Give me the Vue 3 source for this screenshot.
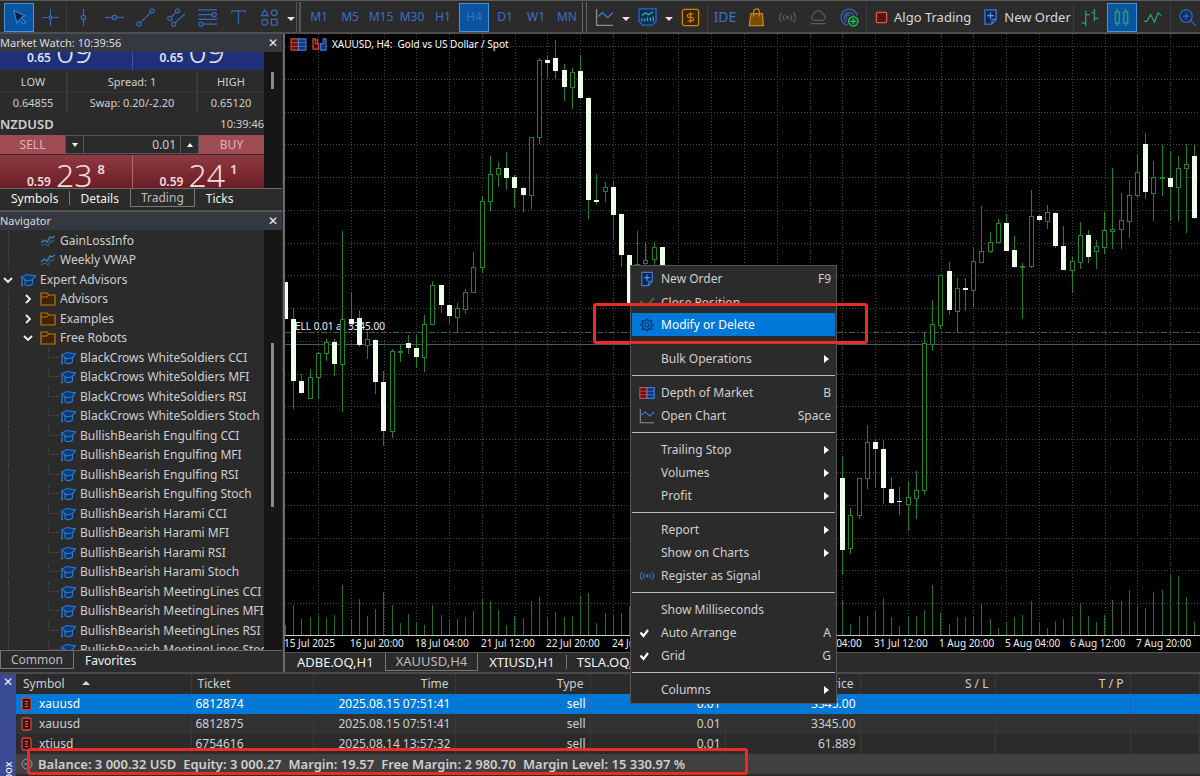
<script setup>
import { ref } from 'vue'

const drawTools = [
  { id: 'vline', label: 'Vertical line' },
  { id: 'hline', label: 'Horizontal line' },
  { id: 'trend', label: 'Trendline' },
  { id: 'channel', label: 'Channel' },
  { id: 'fibo', label: 'Fibonacci' },
  { id: 'text', label: 'Text' },
  { id: 'shapes', label: 'Shapes' }
]
const timeframes = ['M1', 'M5', 'M15', 'M30', 'H1', 'H4', 'D1', 'W1', 'MN']
const lot = ref('0.01')

const robots = [
  'BlackCrows WhiteSoldiers CCI', 'BlackCrows WhiteSoldiers MFI', 'BlackCrows WhiteSoldiers RSI',
  'BlackCrows WhiteSoldiers Stoch', 'BullishBearish Engulfing CCI', 'BullishBearish Engulfing MFI',
  'BullishBearish Engulfing RSI', 'BullishBearish Engulfing Stoch', 'BullishBearish Harami CCI',
  'BullishBearish Harami MFI', 'BullishBearish Harami RSI', 'BullishBearish Harami Stoch',
  'BullishBearish MeetingLines CCI', 'BullishBearish MeetingLines MFI', 'BullishBearish MeetingLines RSI',
  'BullishBearish MeetingLines Stoch'
]
const tree = [
  { t: 'GainLossInfo', k: 'ind', l: 2 },
  { t: 'Weekly VWAP', k: 'ind', l: 2 },
  { t: 'Expert Advisors', k: 'cap', l: 1, c: 'open' },
  { t: 'Advisors', k: 'folder', l: 2, c: 'closed' },
  { t: 'Examples', k: 'folder', l: 2, c: 'closed' },
  { t: 'Free Robots', k: 'folder', l: 2, c: 'open' },
  ...robots.map(t => ({ t, k: 'cap', l: 3 }))
]

// index, rising (1) or falling (0), high, body top, body bottom, low
const candles = [
  [0,0,248,248,285,285],[1,0,274,285,347,375],[2,0,340,347,359,360],[3,1,335,343,364,364],
  [4,1,318,319,343,365],[5,1,305,308,319,327],[6,0,305,308,330,342],[7,1,197,285,330,378],
  [8,0,259,285,290,290],[9,0,276,284,311,313],[10,1,297,305,311,325],[11,0,305,306,348,360],
  [12,0,337,348,397,412],[13,1,315,317,397,404],[14,1,310,317,318,328],[15,0,301,309,314,320],
  [16,0,301,314,323,334],[17,1,281,290,323,338],[18,1,247,251,290,291],[19,0,251,251,271,279],
  [20,0,271,271,282,290],[21,1,269,274,283,299],[22,1,255,258,275,280],[23,1,218,233,258,259],
  [24,1,162,167,233,239],[25,1,122,140,167,177],[26,1,128,134,140,153],[27,0,118,134,144,156],
  [28,0,141,143,154,174],[29,0,153,154,161,178],[30,1,103,103,161,175],[31,1,24,26,103,110],
  [32,0,22,26,29,44],[33,0,6,24,37,45],[34,0,30,36,53,67],[35,1,34,38,53,75],
  [36,0,21,37,64,65],[37,0,63,64,166,185],[38,0,140,166,168,171],[39,1,148,153,157,168],
  [40,0,147,153,181,206],[41,0,180,180,221,233],[42,0,221,221,269,270],[43,1,197,230,236,240],
  [44,1,208,226,229,235],[45,1,208,213,225,235],[46,0,213,213,240,240],
  [68,0,422,444,516,541],[69,1,474,481,514,520],[70,1,444,444,481,485],[71,1,391,408,444,455],
  [72,0,406,408,415,454],[73,0,406,415,454,470],[74,0,443,455,469,470],[75,0,453,467,468,481],
  [76,1,448,463,470,497],[77,1,437,456,464,485],[78,1,298,309,456,461],[79,1,266,290,310,317],
  [80,1,241,241,291,295],[81,0,228,237,276,281],[82,1,244,254,277,299],[83,0,244,254,256,277],
  [84,1,214,227,256,273],[85,1,172,217,228,229],[86,1,198,208,217,219],[87,1,185,189,208,209],
  [88,0,180,189,217,217],[89,0,202,216,233,234],[90,1,229,232,233,285],[91,1,156,182,232,234],
  [92,0,181,182,186,188],[93,1,171,178,187,195],[94,0,178,179,212,214],[95,0,192,212,236,236],
  [96,1,223,227,236,259],[97,1,188,201,228,235],[98,0,196,201,223,229],[99,1,206,212,217,235],
  [100,1,178,196,213,220],[101,1,134,195,197,215],[102,1,159,186,195,215],[103,1,146,161,187,204],
  [104,1,120,138,161,164],[105,0,99,110,158,165],[106,1,127,143,159,187],[107,1,111,143,144,162],
  [108,0,117,144,153,187],[109,1,122,134,153,187],[110,1,110,130,134,199],[111,0,110,122,184,185]
]
const volumes = [
  10,30,16,18,20,17,20,50,16,36,19,26,43,30,12,21,13,10,30,20,15,16,18,24,36,34,25,10,19,
  17,34,38,17,23,18,19,39,42,12,22,20,22,29,16,12,20,18,12,20,26,18,22,30,16,14,20,18,26,
  32,20,14,18,22,26,18,12,20,24,35,11,19,19,24,37,18,9,19,19,25,50,22,11,18,18,19,32,16,7,
  13,18,20,34,13,7,14,16,19,31,19,13,20,35,34,45,29,27,43,45,60,59,38,13
]
const step = 8.193
const cx = i => Math.round(i * step)
const axisY = 601
const gridX = Array.from({ length: 60 }, (_, i) => Math.round(33 + i * step * 4))
const gridY = Array.from({ length: 18 }, (_, i) => Math.round(12 + i * 32.77))
const dates = ['15 Jul 2025', '16 Jul 20:00', '18 Jul 04:00', '21 Jul 12:00', '22 Jul 20:00', '24 Jul 04:00',
  '25 Jul 12:00', '28 Jul 20:00', '30 Jul 04:00', '31 Jul 12:00', '1 Aug 20:00', '5 Aug 04:00', '6 Aug 12:00', '7 Aug 20:00']

const menu = [
  { t: 'New Order', key: 'F9', icon: 'order' },
  { t: 'Close Position', icon: 'tick', cut: true },
  { t: 'Modify or Delete', icon: 'gear', on: true },
  null,
  { t: 'Bulk Operations', sub: true },
  null,
  { t: 'Depth of Market', key: 'B', icon: 'depth' },
  { t: 'Open Chart', key: 'Space', icon: 'chart' },
  null,
  { t: 'Trailing Stop', sub: true },
  { t: 'Volumes', sub: true },
  { t: 'Profit', sub: true },
  null,
  { t: 'Report', sub: true },
  { t: 'Show on Charts', sub: true },
  { t: 'Register as Signal', icon: 'signal' },
  null,
  { t: 'Show Milliseconds' },
  { t: 'Auto Arrange', key: 'A', icon: 'check' },
  { t: 'Grid', key: 'G', icon: 'check' },
  null,
  { t: 'Columns', sub: true }
]

const rows = [
  ['xauusd', '6812874', '2025.08.15 07:51:41', 'sell', '0.01', '3345.00'],
  ['xauusd', '6812875', '2025.08.15 07:51:41', 'sell', '0.01', '3345.00'],
  ['xtiusd', '6754616', '2025.08.14 13:57:32', 'sell', '0.01', '61.889']
]
</script>

<template>
  <div class="app">
    <svg class="defs" aria-hidden="true">
      <symbol id="i-order" viewBox="0 0 16 18">
        <path d="M2 1.500h12v10l-4.500 5H2z M14 11.500h-4.500v5" fill="#10294f" stroke="#4078d8" stroke-width="1.300" />
        <path d="M8 4v7M4.500 7.500h7" stroke="#5a93f0" stroke-width="1.300" />
      </symbol>
      <symbol id="i-depth" viewBox="0 0 18 14">
        <path d="M1 1h8v12H1z" fill="#5a1512" stroke="#d8443a" stroke-width="1.400" />
        <path d="M9 1h8v12H9z" fill="#12336e" stroke="#3d7be0" stroke-width="1.400" />
        <path d="M1 5h8M1 9h8" stroke="#d8443a" /><path d="M9 5h8M9 9h8" stroke="#3d7be0" />
      </symbol>
      <symbol id="i-chart" viewBox="0 0 18 18">
        <path d="M1.500 1v15.500H17" fill="none" stroke="#8d8d8d" stroke-width="1.200" />
        <path d="M3 8l4-3.500 5 4.500 5-4.500" fill="none" stroke="#3f74cf" stroke-width="1.400" />
      </symbol>
      <symbol id="i-signal" viewBox="0 0 20 14">
        <g fill="none" stroke="currentColor" stroke-width="1.300">
          <path d="M4 2c-3 3-3 7 0 10M16 2c3 3 3 7 0 10M7 4c-2 2-2 4 0 6M13 4c2 2 2 4 0 6" />
          <circle cx="10" cy="7" r="1.200" />
        </g>
      </symbol>
      <symbol id="i-cap" viewBox="0 0 16 14">
        <path d="M5 7v4.500c2 1.500 5.500 1.500 7.500-.5V6.500" fill="#0d3160" stroke="#2a78cc" stroke-width="1.200" />
        <path d="M1.500 4L7 1.500l8.500 1.300L12 7l-5.500.8z" fill="#0b3a78" stroke="#2a78cc" stroke-width="1.200" />
        <path d="M2 4.500V13M1 12.500h2" stroke="#2a78cc" stroke-width="1.300" />
      </symbol>
      <symbol id="i-folder" viewBox="0 0 16 14">
        <path d="M1 13V1h6l1.500 2H15v10z" fill="#3f2500" stroke="#bd7a0c" stroke-width="1.200" />
        <path d="M1.500 5H7l1.500-2" fill="none" stroke="#bd7a0c" />
      </symbol>
      <symbol id="i-ind" viewBox="0 0 16 14">
        <path d="M1 9l3-3 3 2 3-5 1.500 1L15 2" fill="none" stroke="#3b86b5" stroke-width="1.300" />
        <path d="M1 12l4-2 3 2 2-5 2 1 2-2" fill="none" stroke="#2f5d88" stroke-width="1.200" />
      </symbol>
      <symbol id="i-gear" viewBox="0 0 16 16">
        <path d="M8 2l1.700 2 3-.3-.7 2.800L14 8l-2 1.500.7 2.800-3-.3L8 14l-1.700-2-3 .3.700-2.800L2 8l2-1.500-.7-2.800 3 .3z" fill="none" stroke="#10357a" stroke-width="1.300" />
        <circle cx="8" cy="8" r="2" fill="none" stroke="#10357a" stroke-width="1.200" />
      </symbol>
      <symbol id="i-tick" viewBox="0 0 16 16">
        <path d="M1.500 4l5 6L15 1" fill="none" stroke="#2f8a3c" stroke-width="1.500" />
      </symbol>
      <symbol id="i-check" viewBox="0 0 16 16">
        <path d="M1.500 7.500L4.500 11 9 5" fill="none" stroke="#fff" stroke-width="2.200" />
      </symbol>
    </svg>

    <header class="toolbar">
      <div class="group draw">
        <button class="tb on" aria-label="Cursor"><svg viewBox="0 0 20 20"><path d="M4 3l3.500 13 2.500-4 4.500 5 2-2-5-4.500 4-2.500z" fill="#0c1d38" stroke="#2c86e6" stroke-width="1.200" /></svg></button>
        <button class="tb" aria-label="Crosshair"><svg viewBox="0 0 20 20"><path d="M10 1v18M1 10h18" /><circle cx="10" cy="10" r="1.500" class="hole" /></svg></button>
        <i class="sep"></i>
        <button v-for="d in drawTools" :key="d.id" class="tb" :aria-label="d.label">
          <svg viewBox="0 0 20 20">
            <template v-if="d.id === 'vline'"><path d="M10 1v18" /><circle cx="10" cy="10" r="2.200" class="hole" /></template>
            <template v-else-if="d.id === 'hline'"><path d="M0 10h20" /><circle cx="10" cy="10" r="2.200" class="hole" /></template>
            <template v-else-if="d.id === 'trend'"><path d="M3 17L17 3" /><circle cx="3" cy="17" r="2.200" class="hole" /><circle cx="17" cy="3" r="2.200" class="hole" /></template>
            <template v-else-if="d.id === 'channel'"><path d="M3 11l8-8M7 17L19 6" /><circle cx="3" cy="11" r="2.200" class="hole" /><circle cx="11" cy="3" r="2.200" class="hole" /><circle cx="7" cy="17" r="2.200" class="hole" /></template>
            <template v-else-if="d.id === 'fibo'"><path d="M0 2h20M0 7h15M0 12h20M5 17h15" /><circle cx="17" cy="7" r="2.200" class="hole" /><circle cx="3" cy="17" r="2.200" class="hole" /></template>
            <template v-else-if="d.id === 'text'"><path d="M3 5V3h14v2M10 3v14" /></template>
            <template v-else><path d="M5 2L1.500 8h7zM12 12h6v6h-6z" /><circle cx="15" cy="5" r="3" /><circle cx="5" cy="15" r="3" /></template>
          </svg>
        </button>
        <button class="drop" aria-label="More shapes"></button>
      </div>
      <div class="group frames">
        <button v-for="t in timeframes" :key="t" class="tb" :class="{ on: t === 'H4' }">{{ t }}</button>
      </div>
      <div class="group rest">
        <button class="tb" aria-label="Line chart"><svg viewBox="0 0 18 18"><use href="#i-chart" /></svg></button>
        <button class="drop" aria-label="Chart types"></button>
        <button class="tb" aria-label="Indicators"><svg viewBox="0 0 20 20"><path d="M1 1h18v13l-4 4H5l-4-4z" fill="#0b2d66" /><path d="M4 8l4-3 3 2 5-3M4 14V11M7 14v-3M10 14v-4M13 14v-4M16 14V9" class="mint" /></svg></button>
        <button class="drop" aria-label="More indicators"></button>
        <button class="tb" aria-label="Symbols"><svg viewBox="0 0 20 20"><rect x="1.500" y="1.500" width="17" height="17" rx="2" fill="#3d2400" class="gold" /><path d="M13 6.500H8.500a1.700 1.700 0 000 3.500h3a1.700 1.700 0 010 3.500H7M10 4.500v11" class="gold" /></svg></button>
        <i class="sep"></i>
        <button class="tb ide">IDE</button>
        <button class="tb" aria-label="Market"><svg viewBox="0 0 20 20"><path d="M4 6h12l1.500 12.500h-15z" fill="#7a4b00" class="gold" /><path d="M7 9V4a3 3 0 016 0v5" class="gold" /></svg></button>
        <button class="tb dim" aria-label="Signals"><svg viewBox="0 0 20 14"><use href="#i-signal" /></svg></button>
        <button class="tb dim" aria-label="Cloud"><svg viewBox="0 0 20 20"><path d="M5 13a3.500 3.500 0 010-6.500 5 5 0 019.500 0A3.500 3.500 0 0115 13zM2 16.500h16" /></svg></button>
        <button class="tb" aria-label="Hosting"><svg viewBox="0 0 20 20"><path d="M8 18A8.500 8.500 0 1118 8M7 14.500A5.200 5.200 0 1114.500 8M8.500 11a2 2 0 112-2.500" /><circle cx="14" cy="14" r="5" fill="#0f4a27" class="mint" /><path d="M14 11v6M11 14h6" class="mint" /></svg></button>
        <i class="sep"></i>
        <button class="wide"><svg viewBox="0 0 14 14"><rect x="1.500" y="1.500" width="11" height="11" rx="1" fill="#5b130e" stroke="#d45a4a" stroke-width="1.400" /></svg>Algo Trading</button>
        <button class="wide order"><svg viewBox="0 0 16 18"><use href="#i-order" /></svg>New Order</button>
        <i class="sep"></i>
        <button class="tb green" aria-label="Bars"><svg viewBox="0 0 20 20"><path d="M5 3v16M1 16h4M5 7h4M14 1v13M11 5h3M14 11h4" /></svg></button>
        <button class="tb green on" aria-label="Candles"><svg viewBox="0 0 20 20"><path d="M3.500 4h4v12h-4zM5.500 1v3M5.500 16v3M12.500 4h4v12h-4zM14.500 1v3M14.500 16v3" /></svg></button>
        <button class="tb green" aria-label="Line"><svg viewBox="0 0 20 20"><path d="M1 14h3l4-7 4 8 4-10 3 3" /></svg></button>
        <i class="sep"></i>
        <button class="tb" aria-label="Zoom in"><svg viewBox="0 0 20 20"><circle cx="8.500" cy="8.500" r="6.500" fill="#0a2c66" /><path d="M13.500 13.500L19 19M8.500 5v7M5 8.500h7" /></svg></button>
      </div>
    </header>

    <main class="work">
      <aside class="side">
        <section class="panel watch">
          <h2>Market Watch: 10:39:56<button class="x" aria-label="Close Market Watch">✕</button></h2>
          <div class="body">
            <div class="quotes">
              <div class="prices blue">
                <div><small>0.65</small><b>09</b></div><div><small>0.65</small><b>09</b></div>
              </div>
              <div class="info">
                <span>LOW</span><span>Spread: 1</span><span>HIGH</span>
                <span>0.64855</span><span>Swap: 0.20/-2.20</span><span>0.65120</span>
              </div>
              <div class="name"><strong>NZDUSD</strong><span>10:39:46</span></div>
              <div class="trade">
                <button class="deal">SELL</button>
                <button class="spin down" aria-label="Less"></button>
                <input v-model="lot" aria-label="Volume" />
                <button class="spin up" aria-label="More"></button>
                <button class="deal">BUY</button>
              </div>
              <div class="prices red">
                <div><small>0.59</small><b>23</b><sup>8</sup></div><div><small>0.59</small><b>24</b><sup>1</sup></div>
              </div>
            </div>
            <div class="track"><i class="thumb short"></i></div>
          </div>
          <nav class="tabs">
            <button>Symbols</button><button class="bar">Details</button><button class="cur">Trading</button><button>Ticks</button>
          </nav>
        </section>
        <section class="panel navi">
          <h2>Navigator<button class="x" aria-label="Close Navigator">✕</button></h2>
          <div class="body">
            <ul class="tree">
              <li v-for="n in tree" :key="n.t" :class="'l' + n.l">
                <svg v-if="n.c" class="chev" viewBox="0 0 12 12"><path :d="n.c === 'open' ? 'M2 4l4 4 4-4' : 'M4 2l4 4-4 4'" /></svg>
                <svg class="ic" viewBox="0 0 16 14"><use :href="'#i-' + n.k" /></svg>
                <span>{{ n.t }}</span>
              </li>
            </ul>
            <div class="track"><i class="thumb long"></i></div>
          </div>
          <nav class="tabs nt"><button class="cur">Common</button><button>Favorites</button></nav>
        </section>
      </aside>

      <section class="chartcol">
        <div class="chart">
          <svg class="plot">
            <g class="grid">
              <line v-for="x in gridX" :key="'x' + x" :x1="x + .5" :x2="x + .5" y1="0" :y2="axisY" />
              <line v-for="y in gridY" :key="'y' + y" x1="0" x2="100%" :y1="y + .5" :y2="y + .5" />
            </g>
            <line class="pos" x1="0" x2="100%" y1="298.500" y2="298.500" />
            <line class="bid" x1="0" x2="100%" y1="310.500" y2="310.500" />
            <text class="sell" x="10" y="296">ELL 0.01 at 3345.00</text>
            <line v-for="(v, i) in volumes" :key="'v' + i" class="vol" :x1="cx(i) + .5" :x2="cx(i) + .5" :y1="axisY - v" :y2="axisY" />
            <g v-for="c in candles" :key="c[0]" :class="c[1] ? 'up' : 'dn'">
              <line :x1="cx(c[0]) + .5" :x2="cx(c[0]) + .5" :y1="c[2]" :y2="c[5]" />
              <rect :x="cx(c[0]) - 2 + (c[1] ? .5 : 0)" :y="c[3] + (c[1] ? .5 : 0)" :width="c[1] ? 4 : 5" :height="Math.max(1, c[4] - c[3])" />
            </g>
            <line class="axis" x1="0" x2="100%" :y1="axisY + .5" :y2="axisY + .5" />
            <text v-for="(d, i) in dates" :key="d" :x="Math.round(i * 65.54) - 1" y="613">{{ d }}</text>
          </svg>
          <div class="title">
            <svg viewBox="0 0 18 14"><use href="#i-depth" /></svg>
            <svg viewBox="0 0 16 14"><path d="M1 1v11h6V6H4V1zM6 1v4" fill="#3c100e" stroke="#d8443a" stroke-width="1.300" /><path d="M9 13V6h3V1h3v12z" fill="#12336e" stroke="#3d7be0" stroke-width="1.300" /></svg>
            <span>XAUUSD, H4:&nbsp; Gold vs US Dollar / Spot</span>
          </div>
        </div>
        <nav class="tabs ct">
          <button>ADBE.OQ,H1</button><button class="cur">XAUUSD,H4</button><button>XTIUSD,H1</button><button class="bar">TSLA.OQ,H1</button>
        </nav>
      </section>
    </main>

    <section class="toolbox">
      <div class="strip"><button class="x" aria-label="Close Toolbox">✕</button><span>Toolbox</span></div>
      <div class="terminal">
        <table>
          <colgroup><col class="c1"><col class="c2"><col class="c3"><col class="c4"><col class="c4"><col class="c4"><col class="c4"><col class="c4"><col></colgroup>
          <thead>
            <tr><th>Symbol <i class="asc"></i></th><th>Ticket</th><th>Time</th><th>Type</th><th>Volume</th><th>Price</th><th>S / L</th><th>T / P</th><th></th></tr>
          </thead>
          <tbody>
            <tr v-for="(r, i) in rows" :key="r[1]" :class="{ sel: i === 0, alt: i === 1 }">
              <td><svg viewBox="0 0 11 14"><rect x="1" y="1" width="9" height="12" rx="1.500" fill="#40100e" stroke="#d0473b" stroke-width="1.300" /><path d="M4 4.500h3M4 7h3M4 9.500h3" stroke="#e07066" /></svg>{{ r[0] }}</td>
              <td v-for="c in r.slice(1)" :key="c">{{ c }}</td><td></td><td></td><td></td>
            </tr>
          </tbody>
        </table>
        <div class="balance">
          <svg viewBox="0 0 12 12"><circle cx="6" cy="6" r="5" fill="none" stroke="#999" /><path d="M3.500 6h5" stroke="#bbb" /></svg>
          <span>Balance: 3 000.32 USD</span><span>Equity: 3 000.27</span><span>Margin: 19.57</span><span>Free Margin: 2 980.70</span><span>Margin Level: 15 330.97 %</span>
        </div>
      </div>
    </section>

    <div class="menu" role="menu">
      <template v-for="(m, i) in menu" :key="i">
        <hr v-if="!m">
        <button v-else role="menuitem" :class="{ on: m.on, cut: m.cut }">
          <span class="mi"><svg v-if="m.icon" :viewBox="m.icon === 'chart' ? '0 0 18 18' : m.icon === 'signal' ? '0 0 20 14' : m.icon === 'depth' ? '0 0 18 14' : m.icon === 'order' ? '0 0 16 18' : '0 0 16 16'"><use :href="'#i-' + m.icon" /></svg></span>
          <span class="ml">{{ m.t }}</span>
          <kbd v-if="m.key">{{ m.key }}</kbd>
          <i v-if="m.sub" class="sub"></i>
        </button>
      </template>
    </div>
    <div class="mark one"></div>
    <div class="mark two"></div>
  </div>
</template>

<style>
html, body { height: 100%; background: #2b2b2b; }
body { overflow: hidden; }
</style>

<style scoped>
.app { position: relative; display: flex; flex-direction: column; height: 100vh; overflow: hidden; background: #2b2b2b; color: #cfcfcf; font-family: "Noto Sans", "Open Sans", sans-serif; font-size: 12px; line-height: 16px; }
.app * { box-sizing: border-box; }
.defs { position: absolute; width: 0; height: 0; }
button, input { font: inherit; color: inherit; background: none; border: 0; padding: 0; margin: 0; }

.toolbar { display: flex; flex: none; height: 34px; padding-top: 1px; border-top: 1px solid #5a5a5a; border-bottom: 2px solid #4f4f4f; overflow: hidden; }
.group { display: flex; flex: none; align-items: center; gap: 1px; height: 30px; }
.draw { padding-left: 4px; border-right: 1px solid #555; }
.frames { margin-left: 2px; padding-left: 3px; border-left: 2px solid #555; border-right: 1px solid #666; }
.rest { flex: 1; margin-left: 3px; padding-left: 2px; border-left: 1px solid #666; }
.tb { display: flex; flex: none; align-items: center; justify-content: center; width: 30px; height: 29px; color: #3c6fc4; }
.tb svg { width: 19px; height: 19px; fill: none; stroke: #3668b8; stroke-width: 1.3; overflow: visible; }
.tb .hole { fill: #2b2b2b; }
.tb .gold { stroke: #c98516; }
.tb .mint { stroke: #35b96a; }
.tb.on { background: #0b55a0; border: 1px solid #4b93d8; }
.tb.ide { font-size: 14px; }
.tb.dim { color: #5c5c5c; }
.tb.dim svg { stroke: #5c5c5c; }
.tb.green svg { stroke: #2ba861; }
.sep { flex: none; width: 1px; height: 29px; background: #3c3c3c; }
.rest .sep { margin: 0 1px; }
.drop { flex: none; width: 11px; height: 29px; }
.drop::after { content: ""; display: block; margin: 4px auto 0; width: 0; border: 4px solid transparent; border-top-color: #e6e6e6; border-bottom: 0; }
.wide { display: flex; flex: none; align-items: center; gap: 6px; height: 29px; padding-left: 6px; font-size: 13px; color: #d8d8d8; }
.wide svg { width: 13px; height: 13px; }
.wide.order { padding: 0 0 0 11px; }
.wide.order svg { width: 15px; height: 18px; }

.work { display: flex; flex: 1; min-height: 0; }
.side { display: flex; flex: none; flex-direction: column; width: 285px; border-right: 2px solid #6a6a6a; }
.panel { display: flex; flex-direction: column; margin-right: 1px; }
.panel h2 { display: flex; flex: none; justify-content: space-between; align-items: center; height: 18px; margin: 0; background: #343841; color: #dcdcdc; font-size: 11px; font-weight: 400; }
.x { width: 16px; color: #eee; font: bold 12px/16px "DejaVu Sans", sans-serif; }
.panel .x { margin-right: 1px; }
.body { display: flex; flex: 1; min-height: 0; overflow: hidden; }
.track { flex: none; width: 18px; background: #161616; padding-left: 7px; }
.thumb { display: block; width: 3px; background: #8a8a8a; }
.short { height: 17px; margin-top: 20px; }
.long { height: 164px; margin-top: 113px; }

.watch { height: 174px; }
.quotes { flex: 1; min-width: 0; height: 135px; }
.prices { display: grid; grid-template-columns: 1fr 1fr; gap: 1px; height: 39px; }
.prices > div { display: flex; align-items: flex-end; padding-left: 27px; color: #f0dede; height: 39px; }
.prices small { font-size: 12px; font-weight: 600; line-height: 24px; }
.prices b { font-size: 32px; font-weight: 300; line-height: 38px; margin-left: 5px; }
.prices sup { font-size: 13px; font-weight: 600; line-height: 16px; margin: 0 0 17px 5px; }
.blue { margin-top: -21px; background: #3e50a0; }
.blue > div { background: #1f2f78; color: #dfe3f5; }
.red { margin-top: 1px; background: #b06a70; }
.red > div { background: linear-gradient(#8f3a42, #6c1e27 80%); }
.info { display: grid; grid-template-columns: 66px 1fr 66px; gap: 1px 2px; margin-top: 2px; text-align: center; background: #383838; font-size: 11px; line-height: 20px; }
.info span { background: #2b2b2b; }
.name { display: flex; justify-content: space-between; align-items: center; height: 22px; font-size: 11px; }
.name strong { font-size: 13px; font-weight: 600; }
.trade { display: flex; height: 19px; font-size: 12px; }
.deal { width: 65px; background: #a04c55; color: #dcb4b8; }
.spin { width: 19px; border: 1px solid #555; display: flex; align-items: center; justify-content: center; }
.spin::after { content: ""; border: 3px solid transparent; }
.down::after { border-top: 4px solid #fff; border-bottom: 0; }
.up::after { border-bottom: 4px solid #fff; border-top: 0; }
.trade input { flex: 1; width: 0; padding-right: 4px; border: 1px solid #555; border-width: 1px 0; text-align: right; }

.tabs { display: flex; flex: none; align-items: flex-start; height: 20px; border-top: 1px solid #6a6a6a; color: #f2f2f2; }
.tabs button { height: 18px; padding: 0 11px; line-height: 17px; white-space: nowrap; }
.tabs .cur { background: #2b2b2b; border: 1px solid #777; border-top: 0; color: #bdbdbd; padding: 0 10px; }
.tabs .bar { position: relative; }
.tabs .bar::before { content: ""; position: absolute; left: 0; top: 2px; width: 1px; height: 14px; background: #777; }

.navi { flex: 1; min-height: 0; margin-top: 2px; border-top: 2px solid #555; }
.tree { display: flex; flex: 1; flex-direction: column; min-width: 0; height: calc(100% + 10px); margin: 0; padding: 1px 0 0; list-style: none; overflow: hidden; }
.tree li { display: flex; flex: 1; align-items: center; min-height: 0; white-space: nowrap; position: relative; }
.tree .ic { width: 16px; height: 14px; flex: none; margin-right: 4px; }
.tree .chev { position: absolute; width: 12px; height: 12px; fill: none; stroke: #f0f0f0; stroke-width: 1.8; }
.l1 { padding-left: 20px; }
.l2 { padding-left: 40px; }
.l3 { padding-left: 60px; }
.l1 .chev { left: 2px; }
.l2 .chev { left: 22px; }
.l2::before, .l3::before { content: ""; position: absolute; top: 0; bottom: 0; left: 8px; border-left: 1px dotted #484848; }
.l3::after { content: ""; position: absolute; top: 0; bottom: 50%; left: 48px; width: 10px; border-left: 1px dotted #484848; border-bottom: 1px dotted #585050; }
.nt { height: 22px; }

.chartcol { display: flex; flex: 1; flex-direction: column; min-width: 0; }
.chart { position: relative; flex: 1; min-height: 0; background: #000; overflow: hidden; }
.plot { display: block; width: 100%; height: 100%; }
.grid line { stroke: #40474c; stroke-dasharray: 1 2; }
.pos { stroke: #4a5a4c; stroke-dasharray: 6 2 2 2; }
.bid { stroke: #50565c; }
.vol { stroke: #22702a; }
.axis { stroke: #d0d0d0; }
.up line, .up rect, .dn line { stroke: #1f8424; }
.up rect { fill: #000; }
.dn rect { fill: #efffe9; }
.plot text { fill: #f0f0f0; font: 10px "Noto Sans", "Open Sans", sans-serif; }
.title { position: absolute; left: 5px; top: 2px; display: flex; gap: 4px; align-items: center; color: #fff; font-size: 10px; }
.title svg { width: 17px; height: 13px; }
.ct { padding-left: 1px; font-size: 13px; border-top-color: #555; }

.toolbox { display: flex; flex: none; height: 104px; border-top: 2px solid #4a4a4a; }
.strip { display: flex; flex: none; flex-direction: column; justify-content: space-between; align-items: center; width: 16px; height: 140px; background: #3b4a94; }
.strip .x { width: 14px; }
.strip span { writing-mode: vertical-rl; transform: rotate(180deg); font-size: 11px; height: 53px; color: #fff; text-align: right; }
.terminal { flex: 1; min-width: 0; }
table { width: 100%; table-layout: fixed; border-collapse: collapse; }
.c1 { width: 175px; } .c2 { width: 122px; } .c3 { width: 142px; } .c4 { width: 135px; }
th, td { height: 20px; padding: 0 4px; font-weight: 400; text-align: right; border-right: 1px solid #393939; white-space: nowrap; overflow: hidden; }
th { padding-right: 6px; }
th:first-child, td:first-child, th:nth-child(2), td:nth-child(2) { text-align: left; }
th:first-child { padding-left: 7px; }
th:nth-child(2) { padding-left: 6px; }
td svg { width: 11px; height: 14px; margin-right: 7px; vertical-align: -3px; }
td:first-child { padding-left: 5px; }
.alt { background: #323232; }
.sel { background: #0078d7; color: #fff; }
.sel td { border-color: #1a6cb4; }
.asc { display: inline-block; margin: 0 0 3px 14px; border: 4px solid transparent; border-bottom-color: #ddd; border-top: 0; }
.balance { display: flex; align-items: center; gap: 7px; height: 20px; padding-left: 5px; background: #404040; font-weight: 600; font-size: 13px; white-space: nowrap; }
.balance svg { width: 12px; height: 12px; margin-right: -2px; }

.menu { position: absolute; left: 630px; top: 265px; width: 207px; padding: 1px 1px 2px; background: #2b2b2b; border: 1px solid #555; display: flex; flex-direction: column; }
.menu button { display: flex; align-items: center; height: 23px; padding-right: 4px; text-align: left; line-height: 18px; }
.menu hr { width: 100%; height: 1px; margin: 5px 0; border: 0; background: #b8b8b8; }
.menu hr:first-of-type { background: transparent; }
.mi { display: flex; justify-content: center; width: 29px; color: #3f74cf; }
.mi svg { width: 16px; height: 16px; }
.ml { flex: 1; }
.menu kbd { font: inherit; }
.menu .on { background: #0078d7; color: #fff; }
.menu .cut { height: 15px; margin-bottom: 8px; overflow: hidden; align-items: flex-start; padding-top: 4px; }
.cut .mi { padding-top: 3px; }
.sub { margin-right: 2px; border: 4px solid transparent; border-left: 5px solid #fff; border-right: 0; }
.mark { position: absolute; border: 3px solid #ee2a24; border-radius: 3px; }
.one { left: 593px; top: 303px; width: 275px; height: 41px; }
.two { left: 27px; top: 748px; width: 721px; height: 27px; }
</style>
